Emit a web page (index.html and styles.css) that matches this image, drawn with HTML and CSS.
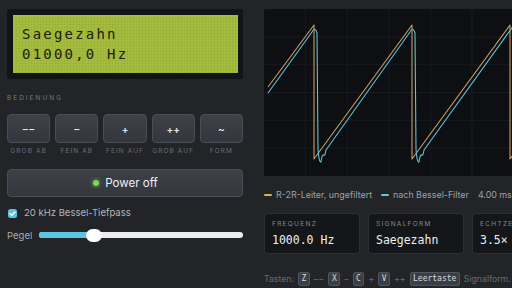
FILE: index.html
```html
<!DOCTYPE html>
<html lang="de">
<head>
<meta charset="utf-8">
<title>R-2R Signalgenerator</title>
<link rel="stylesheet" href="styles.css">
</head>
<body>
<div class="app">
  <section class="left">
    <div class="lcd">
      <div class="lcd-screen">
        <div class="lcd-line">Saegezahn</div>
        <div class="lcd-line">01000,0 Hz</div>
      </div>
    </div>
    <div class="section-label">BEDIENUNG</div>
    <div class="buttons">
      <div class="btn-col"><button class="key key-wide">––</button><span class="key-label">GROB AB</span></div>
      <div class="btn-col"><button class="key">–</button><span class="key-label">FEIN AB</span></div>
      <div class="btn-col"><button class="key">+</button><span class="key-label">FEIN AUF</span></div>
      <div class="btn-col"><button class="key">++</button><span class="key-label">GROB AUF</span></div>
      <div class="btn-col"><button class="key">~</button><span class="key-label">FORM</span></div>
    </div>
    <button class="power"><span class="led"></span>Power off</button>
    <label class="check">
      <span class="box"><svg width="9" height="9" viewBox="0 0 9 9"><path d="M2.2 4.7 L3.8 6.2 L6.9 2.9" fill="none" stroke="#ffffff" stroke-width="1.4" stroke-linecap="round" stroke-linejoin="round"/></svg></span>
      20 kHz Bessel-Tiefpass
    </label>
    <div class="level">
      <span class="level-label">Pegel</span>
      <div class="track">
        <div class="fill" style="width:27%"></div>
        <div class="thumb" style="left:27%"></div>
      </div>
    </div>
  </section>

  <section class="right">
    <div class="scope">
      <svg width="416" height="167" viewBox="0 0 416 167">
        <g stroke="#181b1f" stroke-width="1">
          <line x1="41.6" y1="0" x2="41.6" y2="167"/>
          <line x1="83.2" y1="0" x2="83.2" y2="167"/>
          <line x1="124.8" y1="0" x2="124.8" y2="167"/>
          <line x1="166.4" y1="0" x2="166.4" y2="167"/>
          <line x1="208" y1="0" x2="208" y2="167"/>
          <line x1="249.6" y1="0" x2="249.6" y2="167"/>
          <line x1="0" y1="28" x2="416" y2="28"/>
          <line x1="0" y1="55.7" x2="416" y2="55.7"/>
          <line x1="0" y1="83.5" x2="416" y2="83.5"/>
          <line x1="0" y1="111.3" x2="416" y2="111.3"/>
          <line x1="0" y1="139" x2="416" y2="139"/>
        </g>
        <path d="M4 78 L50 16 L50 150 L148 16 L148 150 L246 16 L246 150 L340 22" fill="none" stroke="#c99e62" stroke-width="1.1" stroke-linejoin="round"/>
        <path d="M4 84 L48 23 Q51 17 53 24 L54 140 Q55 154 57 153 Q58 145 60 146 Q61 147 62 141 L146 23 Q149 17 151 24 L152 140 Q153 154 155 153 Q156 145 158 146 Q159 147 160 141 L250 16" fill="none" stroke="#5ec2da" stroke-width="1.1" stroke-linejoin="round"/>
      </svg>
    </div>
    <div class="legend">
      <span class="legend-item"><span class="swatch swatch-raw"></span>R-2R-Leiter, ungefiltert</span>
      <span class="legend-item"><span class="swatch swatch-filt"></span>nach Bessel-Filter</span>
      <span class="legend-item">4.00 ms Fenster</span>
    </div>
    <div class="stats">
      <div class="stat"><div class="stat-label">FREQUENZ</div><div class="stat-value">1000.0 Hz</div></div>
      <div class="stat"><div class="stat-label">SIGNALFORM</div><div class="stat-value">Saegezahn</div></div>
      <div class="stat"><div class="stat-label">ECHTZEIT</div><div class="stat-value">3.5×</div></div>
    </div>
    <div class="keys">
      <span>Tasten:</span>
      <kbd>Z</kbd><span class="dash2">––</span>
      <kbd>X</kbd><span>–</span>
      <kbd>C</kbd><span>+</span>
      <kbd>V</kbd><span>++</span>
      <kbd>Leertaste</kbd><span>Signalform.</span>
    </div>
  </section>
</div>
</body>
</html>
```

FILE: styles.css
```css
* { box-sizing: border-box; }
html, body {
  margin: 0;
  padding: 0;
  width: 512px;
  height: 288px;
  overflow: hidden;
  background: #222428;
  font-family: Inter, "Noto Sans", sans-serif;
  color: #c8cbd0;
}
.app {
  display: flex;
  gap: 21px;
  padding: 9px 0 0 7px;
  width: 760px;
}
.left {
  width: 236px;
  flex: none;
  display: flex;
  flex-direction: column;
}
.lcd {
  height: 70px;
  background: #121417;
  border-radius: 3px;
  padding: 6px 5px 6px 6px;
}
.lcd-screen {
  height: 100%;
  background-color: #a6bc3d;
  background-image:
    repeating-linear-gradient(90deg, rgba(0,0,0,0.035) 0 1px, transparent 1px 3px),
    repeating-linear-gradient(0deg, rgba(0,0,0,0.035) 0 1px, transparent 1px 3px);
  box-shadow: inset 0 1px 2px rgba(255,255,255,0.15);
  display: flex;
  flex-direction: column;
  justify-content: center;
  padding-left: 9px;
}
.lcd-line {
  font-family: "DejaVu Sans Mono", monospace;
  font-size: 14px;
  line-height: 20px;
  letter-spacing: 2.2px;
  color: #1b200c;
}
.section-label {
  margin-top: 15px;
  font-size: 6.5px;
  line-height: 8px;
  letter-spacing: 2px;
  color: #74787f;
}
.buttons {
  margin-top: 12px;
  display: flex;
  gap: 5px;
}
.btn-col {
  flex: 1;
  display: flex;
  flex-direction: column;
  align-items: center;
}
.key {
  width: 100%;
  height: 29px;
  border: 1px solid #4a4d54;
  border-radius: 4px;
  background: linear-gradient(#3e4148, #33363c);
  color: #e6e7e9;
  font-family: Inter, sans-serif;
  font-size: 10px;
  font-weight: 600;
  padding: 0;
}
.key-wide { letter-spacing: 1.5px; text-indent: 1.5px; }
.key-label {
  margin-top: 4px;
  font-size: 6.5px;
  line-height: 8px;
  letter-spacing: 1.1px;
  color: #6b6f77;
  white-space: nowrap;
}
.power {
  margin-top: 14px;
  height: 28px;
  border: 1px solid #4a4d54;
  border-radius: 4px;
  background: linear-gradient(#3d4047, #34373d);
  color: #eef0f2;
  font-family: Inter, sans-serif;
  font-size: 11.5px;
  font-weight: 400;
  display: flex;
  align-items: center;
  justify-content: center;
  gap: 6px;
  padding: 0 0 0 1px;
}
.led {
  width: 6px;
  height: 6px;
  border-radius: 50%;
  background: #7fd65a;
  box-shadow: 0 0 4px rgba(127,214,90,0.8);
}
.check {
  margin-top: 10px;
  display: flex;
  align-items: center;
  gap: 7px;
  font-size: 9.5px;
  line-height: 12px;
  color: #b3b6bc;
  padding-left: 1px;
}
.box {
  width: 9px;
  height: 9px;
  border-radius: 2.5px;
  background: #5cc4de;
  display: flex;
}
.level {
  margin-top: 9px;
  height: 14px;
  display: flex;
  align-items: center;
  gap: 8px;
}
.level-label {
  font-size: 9.5px;
  color: #a9acb2;
  width: 24px;
}
.track {
  position: relative;
  flex: 1;
  height: 6px;
  border-radius: 3px;
  background: #eceded;
}
.fill {
  height: 100%;
  border-radius: 3px 0 0 3px;
  background: #5cc4de;
}
.thumb {
  position: absolute;
  top: -3.5px;
  width: 16px;
  height: 13px;
  margin-left: -8px;
  border-radius: 7px;
  background: #ffffff;
}
.right {
  width: 416px;
  flex: none;
  display: flex;
  flex-direction: column;
}
.scope {
  height: 167px;
  background: #0d0f12;
  border-radius: 2px;
  overflow: hidden;
}
.scope svg { display: block; }
.legend {
  margin-top: 13px;
  display: flex;
  gap: 9px;
  font-size: 8.9px;
  line-height: 12px;
  color: #9ea2a8;
  white-space: nowrap;
}
.legend-item {
  display: flex;
  align-items: center;
  gap: 4px;
}
.swatch {
  width: 8px;
  height: 2px;
  border-radius: 1px;
}
.swatch-raw { background: #d4b35a; }
.swatch-filt { background: #5ec6df; }
.stats {
  margin-top: 12px;
  display: flex;
  gap: 8px;
}
.stat {
  width: 96px;
  height: 41px;
  flex: none;
  background: #141619;
  border: 1px solid #2b2e33;
  border-radius: 3px;
  padding: 6px 0 0 7px;
}
.stat-label {
  font-size: 6.5px;
  line-height: 8px;
  letter-spacing: 1.3px;
  color: #858990;
}
.stat-value {
  margin-top: 5px;
  font-family: "DejaVu Sans Mono", monospace;
  font-size: 11.5px;
  line-height: 14px;
  color: #eceef0;
}
.keys {
  margin-top: 18px;
  display: flex;
  align-items: center;
  gap: 4px;
  font-size: 8.7px;
  line-height: 14px;
  color: #676b72;
  white-space: nowrap;
}
.dash2 { letter-spacing: 1px; }
kbd {
  font-family: "DejaVu Sans Mono", monospace;
  font-size: 8px;
  line-height: 12px;
  padding: 0 2.5px;
  background: #3a3e45;
  border: 1px solid #50545c;
  border-radius: 2px;
  color: #d8dade;
}
```
